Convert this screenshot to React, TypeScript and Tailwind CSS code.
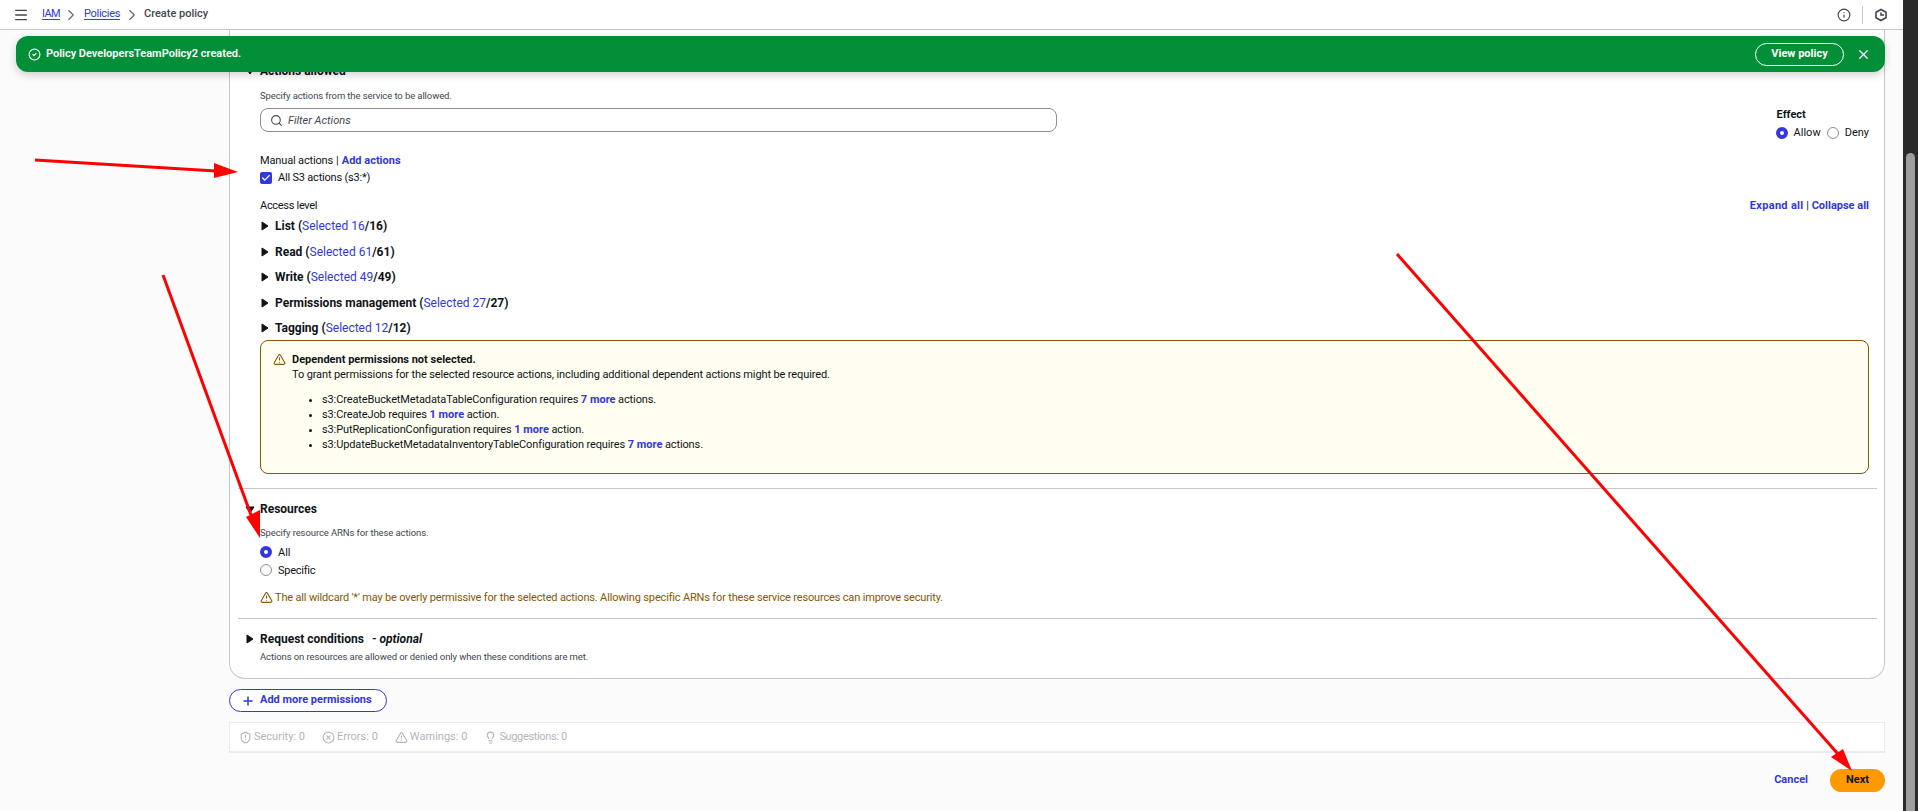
import { Check, ChevronRight, CircleCheck, CircleX, Info, Lightbulb, Menu, Plus, Search, ShieldAlert, TriangleAlert, X } from 'lucide-react'

const levels = [
  { name: 'List', selected: 16 },
  { name: 'Read', selected: 61 },
  { name: 'Write', selected: 49 },
  { name: 'Permissions management', selected: 27 },
  { name: 'Tagging', selected: 12 },
]

const dependents = [
  { text: 's3:CreateBucketMetadataTableConfiguration requires ', more: '7 more', end: ' actions.' },
  { text: 's3:CreateJob requires ', more: '1 more', end: ' action.' },
  { text: 's3:PutReplicationConfiguration requires ', more: '1 more', end: ' action.' },
  { text: 's3:UpdateBucketMetadataInventoryTableConfiguration requires ', more: '7 more', end: ' actions.' },
]

function Caret({ open = false }: { open?: boolean }) {
  return (
    <svg width="8" height="10" viewBox="0 0 8 10" className={open ? 'absolute left-[-14px] top-[4px] rotate-90' : 'absolute left-[-14px] top-[3px]'}>
      <path d="M1 1l6 4-6 4z" fill="#0f141a" stroke="#0f141a" />
    </svg>
  )
}

function Radio({ checked = false }: { checked?: boolean }) {
  return checked ? (
    <span className="w-3 h-3 rounded-full border-[4px] border-[#3237e0] bg-white" />
  ) : (
    <span className="w-3 h-3 rounded-full border border-[#8c8c94] bg-white" />
  )
}

export default function App() {
  return (
    <div className="relative h-[811px] overflow-hidden flex font-['Roboto',sans-serif] text-[11px] text-[#0f141a]">
      <div className="w-[1903px] h-full bg-[#fbfbfc] flex flex-col">
        {/* Breadcrumbs */}
        <div className="h-[30px] shrink-0 bg-white border-b border-[#c6c6cd] flex items-center pr-[15px]">
          <Menu size={16} className="ml-[13px] text-[#424650]" />
          <a className="ml-[13px] w-[18px] tracking-[-0.6px] text-[#3237e0] underline underline-offset-2">IAM</a>
          <ChevronRight size={18} strokeWidth={1.5} className="ml-[2px] mr-[4px] text-[#656871]" />
          <a className="w-[35px] tracking-[-0.3px] text-[#3237e0] underline underline-offset-2">Policies</a>
          <ChevronRight size={18} strokeWidth={1.5} className="ml-[4px] mr-[3px] text-[#656871]" />
          <span className="font-medium text-[#424650]">Create policy</span>
          <Info size={14} className="ml-auto text-[#424650]" />
          <div className="w-px h-[18px] bg-[#c6c6cd] mx-[11px]" />
          <svg width="14" height="14" viewBox="0 0 14 14" fill="none" stroke="#424650" strokeWidth="1.6">
            <path d="M7 1.5l5 2.8v5.4l-5 2.8-5-2.8V4.300z" />
            <path d="M7 4.500v2.500h3" />
          </svg>
        </div>

        <div className="ml-[229px] w-[1656px] flex-1 flex flex-col">
          <div className="bg-white border-x border-b border-[#c6c6cd] rounded-b-2xl pl-[30px] pr-[15px] pb-[13px]">
            {/* Actions allowed */}
            <h3 className="relative mt-[32px] h-[18px] flex items-center text-xs font-bold">
              <Caret open />
              Actions allowed
            </h3>
            <p className="mt-2 h-4 flex items-center text-[9.5px] tracking-[-0.1px] text-[#424650]">Specify actions from the service to be allowed.</p>
            <div className="h-7 flex justify-between">
              <div className="mt-1 w-[797px] h-6 rounded-lg border border-[#8c8c94] bg-white flex items-center pl-[9px] gap-[5px]">
                <Search size={13} className="text-[#424650]" />
                <span className="italic text-[#424650] translate-y-px">Filter Actions</span>
              </div>
              <div className="mt-[3px]">
                <div className="h-4 flex items-center font-bold ml-[1px]">Effect</div>
                <div className="mt-[2px] h-4 flex items-center">
                  <Radio checked />
                  <span className="ml-[6px]">Allow</span>
                  <span className="ml-[6px] flex"><Radio /></span>
                  <span className="ml-[6px]">Deny</span>
                </div>
              </div>
            </div>

            <div className="mt-5 h-4 flex items-center translate-y-px">
              <span className="tracking-[-0.15px]">Manual actions</span>
              <span className="mx-[3px]">|</span>
              <a className="font-bold text-[#3237e0]">Add actions</a>
            </div>
            <label className="mt-[2px] h-4 flex items-center gap-[6px]">
              <span className="w-3 h-3 rounded-[2px] bg-[#3237e0] flex items-center justify-center">
                <Check size={10} strokeWidth={3} className="text-white" />
              </span>
              <span className="tracking-[-0.2px]">All S3 actions (s3:*)</span>
            </label>

            <div className="mt-[11px] h-[16.5px] flex items-center justify-between translate-y-px">
              <span className="tracking-[-0.3px]">Access level</span>
              <span className="font-bold text-[#3237e0]">
                <span className="tracking-[0.3px]">Expand all</span> <span className="text-[#0f141a] font-normal">|</span> Collapse all
              </span>
            </div>
            {levels.map((l) => (
              <div key={l.name} className="h-[25.5px] pl-[15px] flex items-center">
                <div className="relative font-bold text-xs">
                  <Caret />
                  {l.name} (<span className="font-normal text-[#3237e0]">Selected {l.selected}</span>/{l.selected})
                </div>
              </div>
            ))}

            {/* Dependent permissions warning */}
            <div className="mt-[-1px] h-[134px] rounded-lg border border-[#855900] bg-[#fffef0] pt-[11px] pl-[12px] flex gap-[6px]">
              <TriangleAlert size={13} className="mt-[1px] text-[#855900]" />
              <div className="leading-[15px]">
                <div className="font-bold">Dependent permissions not selected.</div>
                <div className="tracking-[-0.12px]">To grant permissions for the selected resource actions, including additional dependent actions might be required.</div>
                <ul className="mt-[10px] list-disc pl-[30px] tracking-[-0.12px]">
                  {dependents.map((d) => (
                    <li key={d.text}>
                      {d.text}
                      <a className="font-bold tracking-normal text-[#3237e0]">{d.more}</a>
                      {d.end}
                    </li>
                  ))}
                </ul>
              </div>
            </div>

            <div className="mt-[14px] ml-[-22px] mr-[-8px] h-px bg-[#c6c6cd]" />

            {/* Resources */}
            <h3 className="relative mt-[11px] h-4 flex items-center font-bold text-xs translate-y-px">
              <Caret open />
              Resources
            </h3>
            <p className="mt-[9px] h-4 flex items-center text-[9.5px] tracking-[-0.1px] text-[#424650]">Specify resource ARNs for these actions.</p>
            <div className="mt-[3px] h-4 flex items-center gap-[6px]"><Radio checked /><span className="translate-y-px">All</span></div>
            <div className="mt-[2px] h-4 flex items-center gap-[6px]"><Radio /><span className="translate-y-px tracking-[-0.25px]">Specific</span></div>
            <div className="mt-[11px] h-4 flex items-center gap-[2px] text-[#855900]">
              <TriangleAlert size={13} />
              <span className="translate-y-px tracking-[-0.165px]">The all wildcard '*' may be overly permissive for the selected actions. Allowing specific ARNs for these service resources can improve security.</span>
            </div>

            <div className="mt-[13px] ml-[-22px] mr-[-8px] h-px bg-[#c6c6cd]" />

            {/* Request conditions */}
            <h3 className="relative mt-[12px] h-4 flex items-center font-bold text-xs">
              <Caret />
              Request conditions
              <span className="ml-2 italic font-bold">- optional</span>
            </h3>
            <p className="mt-[2px] h-4 flex items-center text-[9.5px] tracking-[-0.1px] text-[#424650]">Actions on resources are allowed or denied only when these conditions are met.</p>
          </div>

          <button className="mt-[10px] w-[158px] h-[23px] rounded-full border border-[#3237e0] bg-white flex items-center pl-[11px] gap-[5px] font-bold text-[#3237e0]">
            <Plus size={14} strokeWidth={2.5} />
            Add more permissions
          </button>

          {/* Policy validation counters */}
          <div className="mt-[10px] h-[31px] bg-white border border-[#ebebf0] border-b-2 flex items-center pl-[9px] gap-[17px] text-[#b4b4bb]">
            <span className="flex items-center gap-[2px]"><ShieldAlert size={13} /><span>Security: 0</span></span>
            <span className="flex items-center gap-[2px]"><CircleX size={13} /><span>Errors: 0</span></span>
            <span className="flex items-center gap-[2px]"><TriangleAlert size={13} /><span>Warnings: 0</span></span>
            <span className="flex items-center gap-[2px]"><Lightbulb size={13} /><span className="tracking-[-0.35px]">Suggestions: 0</span></span>
          </div>

          <div className="mt-4 flex items-center justify-end gap-[22px] font-bold">
            <a className="text-[#3237e0]">Cancel</a>
            <button className="w-[55px] h-[23px] rounded-full bg-[#ff9900] text-[#0f141a] font-bold">Next</button>
          </div>
        </div>
      </div>

      {/* Scrollbar */}
      <div className="w-[15px] h-full bg-[#2b2b2b] pl-[3px] pt-[153px]">
        <div className="w-[9px] h-full rounded-t-full bg-[#9f9f9f]" />
      </div>

      {/* Flash banner */}
      <div className="absolute left-4 top-9 w-[1869px] h-9 rounded-xl bg-[#038f38] shadow-[0_3px_8px_rgba(0,0,0,0.18)] flex items-center pl-[12px] pr-[14px] text-white">
        <CircleCheck size={13} className="mr-[5px]" />
        <span className="font-semibold">Policy DevelopersTeamPolicy2 created.</span>
        <button className="ml-auto w-[89px] h-[23px] rounded-full border border-white font-bold">View policy</button>
        <X size={15} className="ml-[12px]" />
      </div>

      {/* Annotation arrows */}
      <svg className="absolute inset-0 pointer-events-none" width="1918" height="811" viewBox="0 0 1918 811">
        <path d="M35 160L216 171" stroke="#ff0000" strokeWidth="3" />
        <path d="M238 172L214 163V178z" fill="#ff0000" />
        <path d="M163 275L251 515" stroke="#ff0000" strokeWidth="3" />
        <path d="M260 538L246 517L260 510z" fill="#ff0000" />
        <path d="M1397 254L1838 754" stroke="#ff0000" strokeWidth="3" />
        <path d="M1852 771L1831 757L1843 749z" fill="#ff0000" />
      </svg>
    </div>
  )
}
